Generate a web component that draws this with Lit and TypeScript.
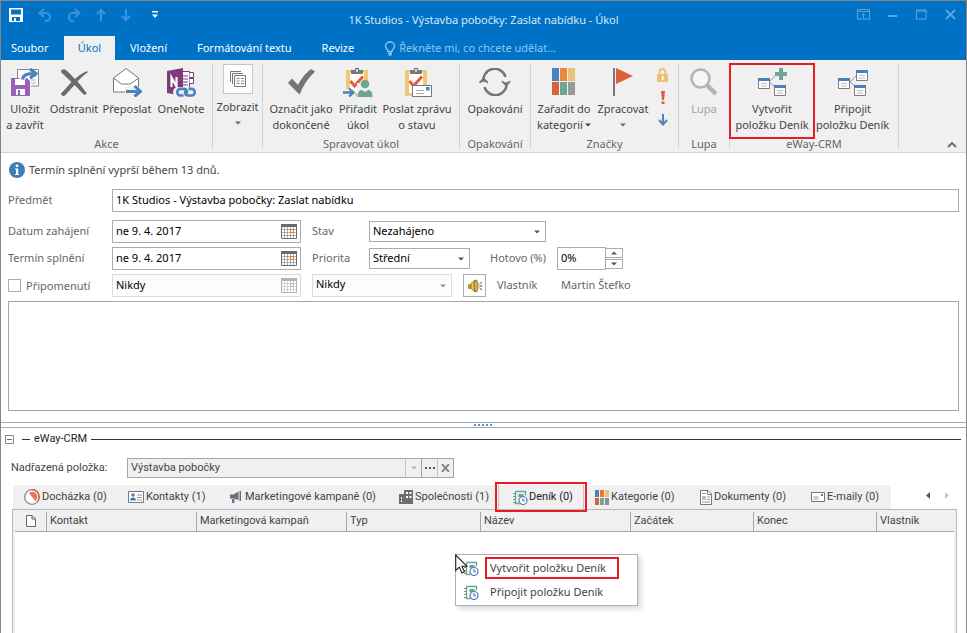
import { LitElement, html, svg, css, nothing, TemplateResult } from "lit";
import { customElement, property, state } from "lit/decorators.js";
import { classMap } from "lit/directives/class-map.js";
import { styleMap } from "lit/directives/style-map.js";

/* ---------- icons ---------- */

const notebook = svg`
  <path d="M2.500 1.500h10v4M2.500 1.500v12h4" fill="none" stroke="#6aa592" stroke-width="1.300"/>
  <path d="M5.500 4h5v3h-5z" fill="#6aa592"/>
  <path d="M0 3.500h3M0 6.500h3M0 9.500h3M0 12.500h3" stroke="#888" stroke-width="1"/>
  <circle cx="10" cy="10.500" r="4" fill="#fff" stroke="#4a7ebb" stroke-width="1.200"/>
  <path d="M10 8v2.700h2" fill="none" stroke="#4a7ebb" stroke-width="1.100"/>`;

const formCard = (x: number, y: number) => svg`
  <path d="M${x + 0.5} ${y + 0.5}h11v10h-11z" fill="#fff" stroke="#7d7d7d"/>
  <path d="M${x} ${y}h12v3H${x}z" fill="#4a7fb8"/>
  <path d="M${x + 3} ${y + 5.5}h6M${x + 3} ${y + 8}h6" stroke="#bdbdbd"/>`;

const clipboard = svg`
  <path d="M3 3h22v26H3z" fill="#f0c878"/>
  <path d="M7 5h14v21H7z" fill="#fff"/>
  <path d="M8 7V3h4V1h4v2h4v4z" fill="#777"/><path d="M13 2.500h2v2h-2z" fill="#fff"/>
  <path d="M7.500 14l4 5L20 9.500" fill="none" stroke="#dc5f3e" stroke-width="3"/>`;

const icons: Record<string, [number, number, TemplateResult | ReturnType<typeof svg>]> = {
  disk: [14, 14, svg`<path d="M0 0h14v14H0z" fill="#fff"/><path d="M2 1.500h10v5H2zM3 9h8v4H3z" fill="#0072c6"/><path d="M5 10h2v3H5z" fill="#fff"/>`],
  undo: [14, 14, svg`<path d="M6 1L1.500 5 6 9M2 5h6.500a3.500 4 0 0 1 0 8H7" fill="none" stroke="#3c94d8" stroke-width="2"/>`],
  redo: [14, 14, svg`<path d="M8 1l4.500 4L8 9M12 5H5.500a3.500 4 0 0 0 0 8H7" fill="none" stroke="#3c94d8" stroke-width="2"/>`],
  up: [10, 14, svg`<path d="M5 13V2M1 6l4-4 4 4" fill="none" stroke="#3c94d8" stroke-width="2"/>`],
  down: [10, 14, svg`<path d="M5 1v11M1 8l4 4 4-4" fill="none" stroke="#3c94d8" stroke-width="2"/>`],
  custom: [6, 8, svg`<path d="M0 0h6v1.500H0zM0 3.500h6L3 7z" fill="#fff"/>`],
  ribbonOpts: [13, 11, svg`<path d="M.5.5h12v9.500H.5zM.5 2.500h12M6.500 9V4.500M4.500 6.500l2-2 2 2" fill="none" stroke="#5ba6df"/>`],
  min: [10, 11, svg`<path d="M0 6h9v2H0z" fill="#5ba6df"/>`],
  max: [11, 11, svg`<path d="M.5 1h9.500v9H.5zM.5 2h10" fill="none" stroke="#5ba6df"/>`],
  close: [11, 11, svg`<path d="M1 1l9 9M10 1l-9 9" fill="none" stroke="#5ba6df" stroke-width="2"/>`],
  bulb: [12, 15, svg`<path d="M4 10.500C4 8.500 1.500 7.500 1.500 5a4.500 4 0 0 1 9 0c0 2.500-2.500 3.500-2.500 5.500zM4 12.500h4M4.500 14.200h3" fill="none" stroke="#8dc9f5" stroke-width="1.300"/>`],
  saveClose: [28, 28, svg`
    <path d="M6.500 11V1.500h21V18H20" fill="#fff" stroke="#8a8a8a"/>
    <path d="M22 8h4M20 12h5M20 15h5" stroke="#b0b0b0"/>
    <path d="M0 10h16l3 3v15H0z" fill="#9a5fb9"/><path d="M4 11h10v6H4z" fill="#fff"/>
    <path d="M5 21h9v6H5z" fill="#fff"/><path d="M7 22h2v5H7z" fill="#9a5fb9"/>
    <path d="M11 12c1-5 5-6.500 10-6.500" fill="none" stroke="#f4f4f4" stroke-width="6"/>
    <path d="M11.500 11.500C12 6.500 16 5.500 22 5.500M19 1l6 4.500-6 4.800" fill="none" stroke="#4a82bd" stroke-width="3.200"/>`],
  remove: [28, 28, svg`<path d="M1 4c0-3 3-3.500 5.500-1.500 3 2.500 6 6 8.500 8.500 3-3 7-6 12-8l.8 1.200C23.500 7 20.500 10.500 17.500 13.500 20.500 17 24 21.500 27 25.500l-2.500 1.500C21 24 18 20.500 14.500 17 11 21 8 24 5 27.500c-2 1-4 0-4-2C4.500 22 8.500 17.500 11.500 14 8 10.500 3.500 7 1 4z" fill="#6b6b6b"/>`],
  forward: [30, 30, svg`<path d="M1.500 11L14 1.500 26.500 11v14h-25z" fill="#fff" stroke="#777"/>
    <path d="M1.500 11l8 6h9l8-6" fill="none" stroke="#777"/>
    <path d="M13 20h17v10H13z" fill="#f0f0f0"/>
    <path d="M14 24.500h13M22.500 19l6 5.500-6 5" fill="none" stroke="#4a82bd" stroke-width="3"/>`],
  onenote: [30, 30, svg`<path d="M15.500 4.500h8v22h-8z" fill="#fff" stroke="#80397b"/>
    <path d="M23.500 5.500h4v5h-4M23.500 11.500h4v5h-4" fill="#fff" stroke="#80397b"/>
    <path d="M17 9h5M17 12h5M17 15h5M17 18h5" stroke="#80397b"/>
    <path d="M1 4l16-3v28L1 26z" fill="#80397b"/>
    <path d="M5.500 20v-9.500l5 9V10" fill="none" stroke="#fff" stroke-width="2.200"/>
    <path d="M12 20h18v10H12a5 5 0 0 1 0-10z" fill="#f0f0f0"/>
    <path d="M17.500 28.500h-3a3.300 3.300 0 0 1 0-6.600h3.500c3 0 4 3.500 1.500 5.500M22.500 21.900h3a3.300 3.300 0 0 1 0 6.600H22c-3 0-4-3.500-1.500-5.500" fill="none" stroke="#4a82bd" stroke-width="2.600"/>`],
  stack: [18, 18, svg`<path d="M1.500 12V1.500H12M3.500 14V3.500H14" fill="none" stroke="#777"/><path d="M5.500 5.500h11v11h-11z" fill="#fff" stroke="#777"/><path d="M7.500 8.500h3M12 8.500h3M7.500 11h3M12 11h3M7.500 13.500h3M12 13.500h3" stroke="#888"/>`],
  check: [28, 28, svg`<path d="M1 15l4-4.500 6 6.500C14 11 19 4.500 24 1l4 2.500C21 10 16 18 12.500 26.500z" fill="#757575"/>`],
  assign: [30, 30, svg`${clipboard}
    <path d="M0 22h12v8H0zM14 16h14v14H14z" fill="#f0f0f0"/>
    <circle cx="22" cy="17" r="4.300" fill="#6ea593"/><path d="M14.500 30c0-5 2-7 4.500-7l3 2 3-2c3 0 4.500 2 4.500 7z" fill="#6ea593"/>
    <path d="M0 25.500h9M6 21.500l4.500 4L6 29.500" fill="none" stroke="#4a82bd" stroke-width="2.300"/>`],
  report: [30, 30, svg`${clipboard}
    <path d="M10.500 18.500h19v11h-19z" fill="#fff" stroke="#777"/><path d="M24 20h3.500v3.500H24z" fill="#4a82bd"/><path d="M14 23.500h8M14 26.500h8" stroke="#aaa"/>`],
  recur: [32, 28, svg`<path d="M4.500 14A11.300 11.300 0 0 1 26.500 9M27.500 14A11.300 11.300 0 0 1 5.500 19" fill="none" stroke="#757575" stroke-width="2.500"/>
    <path d="M0 14l4.500-4.500L9.500 14l-1 1.500-4-3-3.500 3zM22.500 14l4.700 4.500 4.500-4.500-1-1.500-3.500 3-4-3z" fill="#757575"/>`],
  categories: [24, 28, svg`<path d="M0 0h7v13H0z" fill="#4a82bd"/><path d="M8 0h7v13H8z" fill="#e8893c"/><path d="M16 0h7v13h-7z" fill="#ecc27a"/><path d="M0 14h7v13H0z" fill="#dc5f3e"/><path d="M8 14h7v13H8z" fill="#6ea593"/><path d="M16 14h7v13h-7z" fill="#9a9a9a"/>`],
  flag: [20, 28, svg`<path d="M0 0h2v28H0z" fill="#777"/><path d="M3 0l17 8L3 16z" fill="#dc5f3e"/>`],
  lock: [11, 14, svg`<path d="M2.500 7V4a3 3 0 0 1 6 0v3" fill="none" stroke="#ecc27a" stroke-width="2"/><path d="M0 6h11v8H0z" fill="#ecc27a"/><path d="M5 8h1.500v4H5z" fill="#fff"/>`],
  bang: [4, 14, svg`<path d="M0 0h4L3 9H1zM.5 10.500h3V13h-3z" fill="#dc5f3e"/>`],
  low: [10, 13, svg`<path d="M5 0v11M1 6l4 4.500L9 6" fill="none" stroke="#4a82bd" stroke-width="2"/>`],
  lens: [28, 28, svg`<path d="M17 17l9 9" stroke="#b4b4b4" stroke-width="4.500"/><circle cx="10.500" cy="10.500" r="9" fill="#f7f3f9" stroke="#b4b4b4" stroke-width="2.600"/>`],
  create: [30, 30, svg`<path d="M12 15l7-7M12 15l6 5" stroke="#999"/>${formCard(1, 11)}${formCard(17, 18)}<path d="M22 1h4v4h4v4h-4v4h-4V9h-4V5h4z" fill="#6ea593"/>`],
  attach: [30, 30, svg`<path d="M12 15l7-7M12 15l6 5" stroke="#999"/>${formCard(0, 11)}${formCard(18, 3)}${formCard(16, 18)}`],
  chevron: [10, 6, svg`<path d="M1 5l4-4 4 4" fill="none" stroke="#666" stroke-width="1.800"/>`],
  info: [16, 16, svg`<circle cx="8" cy="8" r="8" fill="#3f7cb5"/><circle cx="8" cy="3.800" r="1.400" fill="#fff"/><path d="M6 6.500h3.200V12H10v1H6v-1h1V7.500H6z" fill="#fff"/>`],
  calendar: [16, 15, svg`<path d="M.5.5h15v14H.5z" fill="#fff" stroke="currentColor"/><path d="M0 0h16v3H0z" fill="currentColor"/><path d="M3.500 3v11M6.500 3v11M9.500 3v11M12.500 3v11M1 5.500h14M1 8.500h14M1 11.500h14" stroke="currentColor" stroke-opacity=".5"/><path class="day" d="M9.500 5.500h3v3h-3z"/>`],
  caret: [6, 4, svg`<path d="M0 .5h6L3 3.500z" fill="currentColor"/>`],
  caretUp: [6, 4, svg`<path d="M0 3.500h6L3 .5z" fill="currentColor"/>`],
  sound: [16, 16, svg`<path d="M1 6h3v5H1z" fill="#c79a2e"/><path d="M4 5.500L8 2v12l-4-3.500z" fill="#e8c55a" stroke="#8a6a1a" stroke-width=".8"/><ellipse cx="9" cy="8" rx="2" ry="6" fill="#d9b04a" stroke="#7a5c14" stroke-width=".8"/><path d="M12.500 6l2.500-2M12.500 8h3M12.500 10l2.500 2" stroke="#555"/>`],
  minus: [9, 9, svg`<path d="M.5.5h8v8h-8z" fill="#fff" stroke="#888"/><path d="M2 4.500h5" stroke="#2f6fb5"/>`],
  attendance: [16, 16, svg`<circle cx="8" cy="8" r="7.300" fill="#fff" stroke="#888" stroke-width="1.300"/><path d="M8 .7a7.300 7.300 0 0 1 5 12.300" fill="none" stroke="#dc5f3e" stroke-width="1.300"/><path d="M8 8L5 4a5 5 0 0 1 6.500 8z" fill="#e07a5f"/>`],
  contact: [16, 12, svg`<path d="M.5.5h15v11H.5z" fill="#fff" stroke="#777"/><circle cx="5" cy="4" r="1.700" fill="#3f7cb5"/><path d="M2 9.500c0-4 6-4 6 0z" fill="#3f7cb5"/><path d="M9 4h5M9 6.500h5M9 9h5" stroke="#999"/>`],
  horn: [13, 12, svg`<path d="M0 3.500h3.500L8.500.5V9l-5-1.500H0zM9.500 0H11v10H9.500z" fill="#6d6d6d"/><path d="M2 8h2.500v4H2z" fill="#4a82bd"/>`],
  company: [14, 14, svg`<path d="M0 4h5V0h9v14H0z" fill="#6d6d6d"/><path d="M2 7h1v2H2zM2 10h1v2H2zM7 2h2v2H7zM10.500 2h2v2h-2zM7 6h2v2H7zM10.500 6h2v2h-2z" fill="#fff"/>`],
  diary: [15, 15, notebook],
  cats: [14, 15, svg`<path d="M0 0h4v7H0z" fill="#4a82bd"/><path d="M5 0h4v7H5z" fill="#e8792a"/><path d="M10 0h4v7h-4z" fill="#ecc27a"/><path d="M0 8h4v7H0z" fill="#dc5f3e"/><path d="M5 8h4v7H5z" fill="#6ea593"/><path d="M10 8h4v7h-4z" fill="#8f8f8f"/>`],
  document: [12, 15, svg`<path d="M.5.5h7.500l3.500 3.500v10.500H.5z" fill="#fff" stroke="#777"/><path d="M7.500.5v4h4" fill="none" stroke="#777"/><path d="M2 3.500h4M2 12h8M7 7h3M7 9.500h3" stroke="#999"/><path d="M2 6h4v4H2z" fill="#a8c4e0"/>`],
  mail: [14, 10, svg`<path d="M.5.5h13v9H.5z" fill="#fff" stroke="#777"/><path d="M10 2h2v2h-2z" fill="#4a82bd"/><path d="M2.500 5h5M2.500 7h5" stroke="#999"/>`],
  page: [10, 12, svg`<path d="M.5.5h5.500l3.500 3.500v7.500H.5zM6 .5v3.500h3.500" fill="#fff" stroke="#666"/>`],
  prev: [4, 7, svg`<path d="M4 0v7L0 3.500z" fill="#555"/>`],
  next: [4, 7, svg`<path d="M0 0v7l4-3.500z" fill="#c4c4c4"/>`],
  dots: [10, 2, svg`<path d="M0 0h2v2H0zM4 0h2v2H4zM8 0h2v2H8z" fill="#555"/>`],
  cross: [9, 8, svg`<path d="M1 0l7 8M8 0L1 8" stroke="#8a8a8a" stroke-width="2"/>`],
  grip: [19, 2, svg`<path d="M0 0h2v2H0zM4 0h2v2H4zM8 0h2v2H8zM12 0h2v2h-2zM16 0h2v2h-2z" fill="#5b8fd0"/>`],
  pointer: [13, 20, svg`<path d="M.7 1v15.500l3.600-3.400 2.600 5.900 2.600-1.200-2.600-5.600h5z" fill="#fff" stroke="#222" stroke-width="1.100"/>`],
};

const icon = (name: string) => {
  const [w, h, body] = icons[name];
  return html`<svg class="icon" width=${w} height=${h} viewBox="0 0 ${w} ${h}" aria-hidden="true">${body}</svg>`;
};

/* ---------- data ---------- */

interface Command { icon: string; lines: string[]; width: number; menu?: "inline" | "below"; boxed?: boolean; disabled?: boolean; marked?: boolean; }
interface Group { name: string; commands: Command[]; end: number; flags?: boolean; }

const groups: Group[] = [
  { name: "Akce", end: 5, commands: [
    { icon: "saveClose", lines: ["Uložit", "a zavřít"], width: 48 },
    { icon: "remove", lines: ["Odstranit"], width: 50 },
    { icon: "forward", lines: ["Přeposlat"], width: 56 },
    { icon: "onenote", lines: ["OneNote"], width: 52 } ] },
  { name: "", end: 0, commands: [{ icon: "stack", lines: ["Zobrazit"], width: 49, menu: "below", boxed: true }] },
  { name: "Spravovat úkol", end: 2, commands: [
    { icon: "check", lines: ["Označit jako", "dokončené"], width: 76 },
    { icon: "assign", lines: ["Přiřadit", "úkol"], width: 38 },
    { icon: "report", lines: ["Poslat zprávu", "o stavu"], width: 80 } ] },
  { name: "Opakování", end: 0, commands: [{ icon: "recur", lines: ["Opakování"], width: 70 }] },
  { name: "Značky", end: 2, flags: true, commands: [
    { icon: "categories", lines: ["Zařadit do", "kategorií"], width: 66, menu: "inline" },
    { icon: "flag", lines: ["Zpracovat"], width: 52, menu: "below" } ] },
  { name: "Lupa", end: 0, commands: [{ icon: "lens", lines: ["Lupa"], width: 50, disabled: true }] },
  { name: "eWay-CRM", end: 7, commands: [
    { icon: "create", lines: ["Vytvořit", "položku Deník"], width: 84, marked: true },
    { icon: "attach", lines: ["Připojit", "položku Deník"], width: 77 } ] },
];

const itemTabs = [
  { icon: "attendance", label: "Docházka (0)", width: 104 },
  { icon: "contact", label: "Kontakty (1)", width: 102 },
  { icon: "horn", label: "Marketingové kampaně (0)", width: 169 },
  { icon: "company", label: "Společnosti (1)", width: 110 },
  { icon: "diary", label: "Deník (0)", width: 86 },
  { icon: "cats", label: "Kategorie (0)", width: 105 },
  { icon: "document", label: "Dokumenty (0)", width: 111 },
  { icon: "mail", label: "E-maily (0)", width: 91 },
];

const columns = [
  { label: "Kontakt", width: 150 },
  { label: "Marketingová kampaň", width: 150 },
  { label: "Typ", width: 134 },
  { label: "Název", width: 150 },
  { label: "Začátek", width: 123 },
  { label: "Konec", width: 123 },
];

const shared = css`
  * { box-sizing: border-box; }
  button, input, select, textarea { font: inherit; color: inherit; margin: 0; padding: 0; border: 0; border-radius: 0; background: none; outline: none; }
  .icon { display: block; flex: none; }
`;

/* ---------- ribbon ---------- */

@customElement("task-ribbon")
class TaskRibbon extends LitElement {
  static styles = [shared, css`
    :host { display: flex; background: #f0f0f0; border-bottom: 1px solid #d2d2d2; height: 93px; padding: 4px 0; color: #444; }
    .group { display: flex; flex-direction: column; border-right: 1px solid #d2d2d2; flex: none; }
    .commands { display: flex; flex: 1; }
    .name { line-height: 16px; height: 12px; display: flex; align-items: center; justify-content: center; color: #666; margin-bottom: -1px; }
    .command { display: flex; flex-direction: column; align-items: center; white-space: nowrap; line-height: 16px; height: 74px; color: #444; }
    .art { display: grid; place-items: center; height: 30px; margin: 3px 0 4px; }
    .boxed .art { width: 30px; background: #fdfdfd; border: 1px solid #c6c6c6; margin: 0 0 5px; }
    .disabled { color: #a3a3a3; }
    .line { display: flex; align-items: center; gap: 2px; }
    .below { height: 16px; display: grid; place-items: center; color: #666; }
    .marked { outline: 2px solid #e81c24; outline-offset: -1px; }
    .flags { display: flex; flex-direction: column; align-items: center; gap: 8px; width: 27px; padding-top: 3px; }
    .flags button { display: grid; place-items: center; height: 15px; }
    .collapse { margin-left: auto; align-self: flex-end; margin-right: 9px; }
  `];

  render() {
    return html`${groups.map((g) => html`
      <section class="group" aria-label=${g.name || "Zobrazit"}>
        <div class="commands" style=${styleMap({ paddingRight: g.end + "px" })}>
          ${g.commands.map((c) => html`
            <button ?disabled=${c.disabled} style=${styleMap({ width: c.width + "px" })}
              class=${classMap({ command: true, boxed: !!c.boxed, disabled: !!c.disabled, marked: !!c.marked })}>
              <span class="art">${icon(c.icon)}</span>
              ${c.lines.map((l, i) => html`<span class="line">${l}${c.menu === "inline" && i === c.lines.length - 1 ? icon("caret") : nothing}</span>`)}
              ${c.menu === "below" ? html`<span class="below">${icon("caret")}</span>` : nothing}
            </button>`)}
          ${g.flags ? html`<div class="flags">
            <button aria-label="Soukromé">${icon("lock")}</button>
            <button aria-label="Vysoká důležitost">${icon("bang")}</button>
            <button aria-label="Nízká důležitost">${icon("low")}</button>
          </div>` : nothing}
        </div>
        <div class="name">${g.name}</div>
      </section>`)}
      <button class="collapse" aria-label="Sbalit pás karet">${icon("chevron")}</button>`;
  }
}

/* ---------- task form ---------- */

@customElement("task-form")
class TaskForm extends LitElement {
  static styles = [shared, css`
    :host { display: block; padding: 8px 7px 11px; color: #666; }
    .info { display: flex; align-items: center; gap: 4px; height: 18px; margin-bottom: 10px; padding-left: 1px; color: #444; }
    .row { display: flex; align-items: center; height: 23px; margin-bottom: 4px; }
    .row > label, .row > span { padding-bottom: 2px; }
    .row.subject { margin-bottom: 8px; }
    .row > .lead { flex: none; width: 104px; display: flex; align-items: center; }
    .row > .reminder { padding-bottom: 0; }
    .second { width: 57px; }
    .third { width: 67px; }
    .field { border: 1px solid #ababab; background: #fff; color: #000; height: 23px; display: flex; align-items: center; }
    .field input { flex: 1; min-width: 0; height: 21px; padding: 0 0 3px 3px; }
    .subject .field { flex: 1; }
    .date { width: 189px; margin-right: 11px; }
    .date button { color: #6a6a6a; padding-right: 3px; }
    .day { fill: #fff; stroke: #e07b2f; }
    .off .day { stroke: #b4b0b6; }
    .field.off { border-color: #dcdcdc; background: #fcfcfc; }
    .off button { color: #b4b0b6; }
    .choice { display: grid; align-items: center; height: 21px; }
    .choice select { grid-area: 1 / 1; appearance: none; width: 100%; height: 19px; padding: 0 0 1px 3px; opacity: 1; color: #000; }
    .choice .icon { grid-area: 1 / 1; justify-self: end; margin-right: 5px; color: #555; pointer-events: none; }
    .choice.off { height: 23px; }
    .choice.off select { height: 21px; padding-bottom: 3px; }
    .choice.off .icon { color: #8a958e; }
    .state { width: 177px; }
    .priority { width: 101px; margin-right: 20px; }
    .time { width: 140px; margin-right: 11px; }
    .percent { width: 49px; }
    .spin { display: flex; flex-direction: column; }
    .spin button { width: 17px; height: 10px; border: 1px solid #ababab; border-left: 0; display: grid; place-items: center; color: #555; }
    .spin button + button { margin-top: 1px; }
    .sound { width: 23px; height: 23px; border: 1px solid #ababab; display: grid; place-items: center; margin-right: 11px; }
    .owner { width: 64px; }
    .tick { appearance: none; width: 13px; height: 13px; border: 1px solid #ababab; margin-right: 5px; background: #fff; }
    .notes { display: block; width: 100%; height: 110px; border: 1px solid #a0a8ae; background: #fff; resize: none; padding: 4px; color: #000; }
  `];

  private date(id: string, value: string, off = false) {
    return html`<div class=${classMap({ field: true, date: true, off })}>
      <input id=${id} .value=${value} ?disabled=${off} aria-label=${off ? "Datum připomenutí" : nothing}><button ?disabled=${off} aria-label="Kalendář">${icon("calendar")}</button></div>`;
  }

  private choice(id: string, value: string, kind: string, off = false) {
    return html`<div class=${classMap({ field: true, choice: true, off, [kind]: true })}>
      <select id=${id} ?disabled=${off} aria-label=${off ? "Čas připomenutí" : nothing}><option>${value}</option></select>${icon("caret")}</div>`;
  }

  render() {
    return html`
      <div class="info">${icon("info")}<span>Termín splnění vyprší během 13 dnů.</span></div>
      <div class="row subject"><label class="lead" for="subject">Předmět</label>
        <div class="field"><input id="subject" .value=${"1K Studios - Výstavba pobočky: Zaslat nabídku"}></div></div>
      <div class="row"><label class="lead" for="start">Datum zahájení</label>${this.date("start", "ne 9. 4. 2017")}
        <label class="second" for="state">Stav</label>${this.choice("state", "Nezahájeno", "state")}</div>
      <div class="row"><label class="lead" for="due">Termín splnění</label>${this.date("due", "ne 9. 4. 2017")}
        <label class="second" for="priority">Priorita</label>${this.choice("priority", "Střední", "priority")}
        <label class="third" for="done">Hotovo (%)</label>
        <div class="field percent"><input id="done" .value=${"0%"}></div>
        <div class="spin"><button aria-label="Více">${icon("caretUp")}</button><button aria-label="Méně">${icon("caret")}</button></div></div>
      <div class="row"><label class="lead reminder"><input class="tick" type="checkbox">Připomenutí</label>${this.date("remind", "Nikdy", true)}
        ${this.choice("time", "Nikdy", "time", true)}
        <button class="sound" aria-label="Zvuk">${icon("sound")}</button>
        <span class="owner">Vlastník</span><span>Martin Štefko</span></div>
      <textarea class="notes" aria-label="Poznámky"></textarea>`;
  }
}

/* ---------- eWay-CRM pane ---------- */

@customElement("crm-pane")
class CrmPane extends LitElement {
  @state() private active = 4;

  static styles = [shared, css`
    :host { display: flex; flex-direction: column; flex: 1; font-family: Roboto, "Liberation Sans", sans-serif; color: #444; padding: 0 5px 0 4px; }
    .head { display: flex; align-items: center; height: 20px; gap: 4px; color: #222; }
    .head::after { content: ""; flex: 1; height: 1px; background: #333; }
    .dash { width: 8px; height: 1px; background: #333; margin-left: 4px; }
    .parent { display: flex; align-items: center; height: 20px; margin: 9px 0 7px; padding-left: 6px; }
    .parent label { width: 116px; }
    .lookup { display: flex; width: 327px; height: 20px; border: 1px solid #a6a6a6; background: #f0f0f0; }
    .lookup input { flex: 1; min-width: 0; padding-left: 3px; }
    .lookup button { width: 16px; display: grid; place-items: center; border-left: 1px solid #c8c8c8; color: #b4b4b4; }
    .lookup .more { border-left-color: #a6a6a6; }
    .tabs { display: flex; height: 24px; padding-left: 8px; }
    .tab { display: flex; align-items: center; gap: 2px; padding-left: 11px; background: #f0f0f0; white-space: nowrap; flex: none; }
    .tab.on { border: 1px solid #c4c4c4; border-width: 0 1px; padding-left: 14px; color: #222; outline: 2px solid #e81c24; outline-offset: 1px; position: relative; z-index: 1; gap: 1px; }
    .pager { margin-left: auto; display: flex; gap: 15px; padding-right: 12px; height: 21px; align-items: center; }
    .panel { position: relative; flex: 1; margin: 0 4px 0 7px; border: 1px solid #b8b8b8; border-bottom: 0; padding: 0 2px; background: #f0f0f0; display: flex; flex-direction: column; }
    .sheet { flex: 1; background: #fff; }
    table { width: 100%; table-layout: fixed; border-collapse: separate; border-spacing: 0; background: #f0f0f0; }
    th { height: 22px; padding: 1px 0 0 4px; font-weight: 400; text-align: left; border-bottom: 1px solid #a6a6a6; white-space: nowrap; overflow: hidden; background: linear-gradient(#a6a6a6, #a6a6a6) 0 2px / 1px 100% no-repeat; }
    th:first-child { background: none; padding-left: 11px; }
    .kind { width: 31px; }
    .menu { position: absolute; left: 442px; top: 44px; width: 183px; margin: 0; padding: 1px 0; list-style: none; background: #fff; border: 1px solid #b0b0b0; box-shadow: 3px 3px 5px rgba(0, 0, 0, .15); font-family: "Noto Sans", sans-serif; }
    .menu button { display: flex; align-items: center; width: 100%; height: 24px; padding-left: 8px; gap: 8px; text-align: left; }
    .menu span { padding: 0 11px 0 3px; line-height: 18px; }
    .menu .hot { outline: 2px solid #e81c24; }
    .pointer { position: absolute; left: 442px; top: 44px; }
  `];

  render() {
    return html`
      <div class="head"><button aria-label="Sbalit">${icon("minus")}</button><span class="dash"></span><span>eWay-CRM</span></div>
      <div class="parent"><label for="parent">Nadřazená položka:</label>
        <div class="lookup"><input id="parent" .value=${"Výstavba pobočky"}>
          <button aria-label="Rozbalit">${icon("caret")}</button>
          <button class="more" aria-label="Vybrat">${icon("dots")}</button>
          <button aria-label="Vymazat">${icon("cross")}</button></div></div>
      <div class="tabs" role="tablist">
        ${itemTabs.map((t, i) => html`<button role="tab" aria-selected=${i === this.active} @click=${() => (this.active = i)}
          class=${classMap({ tab: true, on: i === this.active })} style=${styleMap({ width: t.width + "px" })}>${icon(t.icon)}<span>${t.label}</span></button>`)}
        <div class="pager"><button aria-label="Předchozí">${icon("prev")}</button><button aria-label="Další">${icon("next")}</button></div>
      </div>
      <div class="panel">
        <table>
          <colgroup><col class="kind">${columns.map((c) => html`<col style=${styleMap({ width: c.width + "px" })}>`)}<col></colgroup>
          <thead><tr><th>${icon("page")}</th>${columns.map((c) => html`<th>${c.label}</th>`)}<th>Vlastník</th></tr></thead>
        </table>
        <div class="sheet"></div>
        <ul class="menu" role="menu">
          <li role="none"><button role="menuitem">${icon("diary")}<span class="hot">Vytvořit položku Deník</span></button></li>
          <li role="none"><button role="menuitem">${icon("diary")}<span>Připojit položku Deník</span></button></li>
        </ul>
        <div class="pointer">${icon("pointer")}</div>
      </div>`;
  }
}

/* ---------- window ---------- */

@customElement("app-root")
class AppRoot extends LitElement {
  @property() heading = "1K Studios - Výstavba pobočky: Zaslat nabídku - Úkol";

  static styles = [shared, css`
    :host { display: flex; flex-direction: column; min-height: 100vh; box-sizing: border-box; border: 1px solid #858585; border-bottom: 0; background: #fff; font: 11px/16px "Noto Sans", "Open Sans", sans-serif; }
    .top { background: #0072c6; color: #fff; }
    .bar { display: grid; grid-template-columns: 1fr auto 1fr; align-items: center; height: 35px; }
    .quick, .system { display: flex; align-items: center; height: 27px; align-self: start; }
    .quick { gap: 15px; padding-left: 8px; }
    .quick button:last-child { margin-left: 6px; }
    .system { gap: 18px; justify-content: flex-end; padding-right: 10px; }
    .title { color: #d3e9f9; margin: 2px 0 0; font-size: 11px; font-weight: 400; }
    .tabs { display: flex; height: 24px; align-items: center; }
    .tabs button { height: 24px; padding: 0 15px; white-space: nowrap; }
    .tabs .file { width: 63px; padding: 0 0 0 10px; text-align: left; }
    .tabs .current { width: 51px; padding: 0; background: #f0f0f0; color: #0072c6; }
    .tabs .tell { display: flex; align-items: center; gap: 3px; color: #8dc9f5; }
    .split { height: 6px; border: 1px solid #a5a8b8; border-width: 1px 0; display: grid; place-items: center; margin-bottom: 1px; }
  `];

  render() {
    return html`
      <header class="top">
        <div class="bar">
          <div class="quick">
            <button aria-label="Uložit">${icon("disk")}</button><button aria-label="Zpět">${icon("undo")}</button>
            <button aria-label="Znovu">${icon("redo")}</button><button aria-label="Předchozí položka">${icon("up")}</button>
            <button aria-label="Další položka">${icon("down")}</button><button aria-label="Přizpůsobit">${icon("custom")}</button>
          </div>
          <h1 class="title">${this.heading}</h1>
          <div class="system">
            <button aria-label="Zobrazení pásu karet">${icon("ribbonOpts")}</button><button aria-label="Minimalizovat">${icon("min")}</button>
            <button aria-label="Maximalizovat">${icon("max")}</button><button aria-label="Zavřít">${icon("close")}</button>
          </div>
        </div>
        <nav class="tabs">
          <button class="file">Soubor</button><button class="current">Úkol</button><button>Vložení</button>
          <button>Formátování textu</button><button>Revize</button>
          <button class="tell">${icon("bulb")}Řekněte mi, co chcete udělat...</button>
        </nav>
      </header>
      <task-ribbon></task-ribbon>
      <task-form></task-form>
      <div class="split">${icon("grip")}</div>
      <crm-pane></crm-pane>`;
  }
}
